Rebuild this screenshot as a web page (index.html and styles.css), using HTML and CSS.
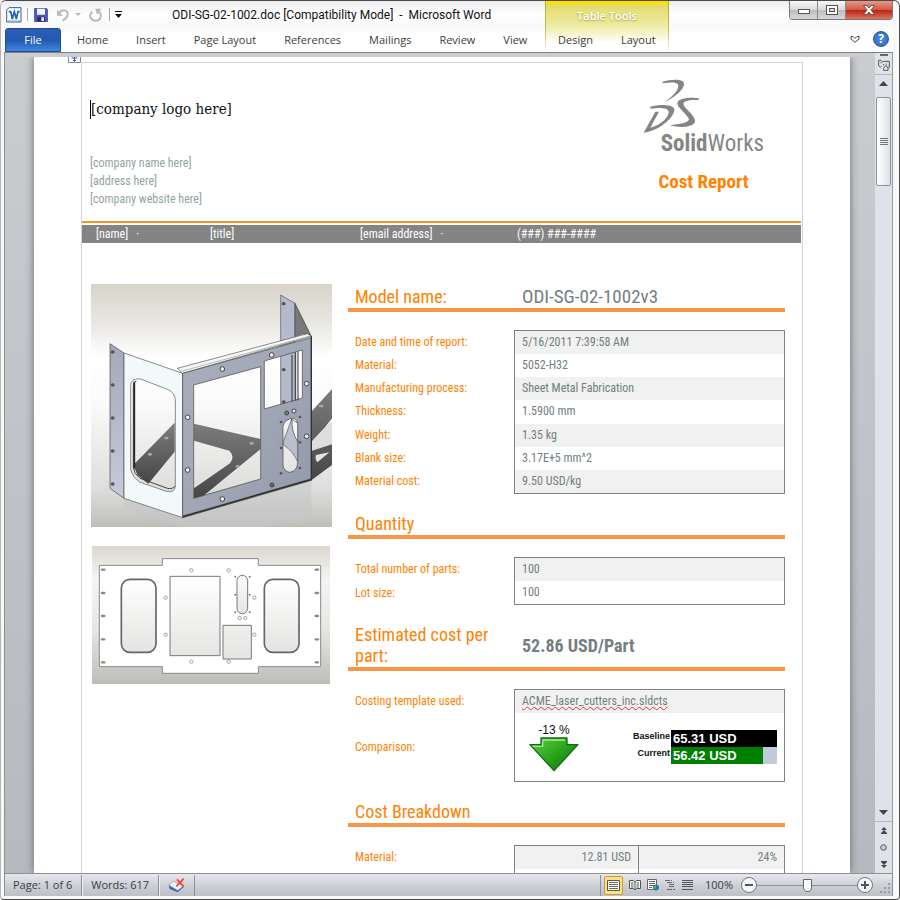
FILE: index.html
```html
<!DOCTYPE html>
<html lang="en">
<head>
<meta charset="utf-8">
<title>ODI-SG-02-1002.doc [Compatibility Mode] - Microsoft Word</title>
<link rel="stylesheet" href="styles.css">
</head>
<body>
<div class="window">
  <header class="head">
    <div class="head-main">
      <div class="titlebar">
        <svg class="word-icon" width="16" height="16" viewBox="0 0 48 48"><path d="M9 2h36v43H2V9z" fill="#fff" stroke="#2c5c96" stroke-width="3"/><path d="M8 14h6l5 22 6-22 6 22 5-22h5" fill="none" stroke="#1e62b8" stroke-width="5"/><path d="M6 40h36" stroke="#9cc4ea" stroke-width="3"/></svg>
        <span class="sep"></span>
        <button class="tool" aria-label="Save"><svg width="14" height="14" viewBox="0 0 42 42"><path d="M1 1h36l4 4v36H1z" fill="#5159b8" stroke="#373d94" stroke-width="2"/><path d="M9 2h24v18H9z" fill="#eef3fd"/><path d="M10 26h23v15H10z" fill="#272b6d"/><path d="M22 28h8v11h-8z" fill="#e5e9f8"/></svg></button>
        <button class="tool undo" aria-label="Undo"><svg width="14" height="14" viewBox="0 0 42 42"><path d="M8 17C17 2 36 5 35 19c0 9-7 14-15 19" fill="none" stroke="#b8b8b8" stroke-width="6"/><path d="M3 5v18h18z" fill="#b8b8b8"/></svg></button>
        <svg class="undo-caret" width="6" height="4" viewBox="0 0 6 4"><path d="M0 0h6L3 3z" fill="#bbb"/></svg>
        <button class="tool redo" aria-label="Redo"><svg width="13" height="14" viewBox="0 0 39 42"><path d="M10 11C-3 23 5 38 20 38c17 0 20-20 8-28" fill="none" stroke="#b8b8b8" stroke-width="6"/><path d="M19 2h18L24 20z" fill="#b8b8b8"/></svg></button>
        <span class="sep"></span>
        <button class="tool more" aria-label="Customize toolbar"><svg width="7" height="7" viewBox="0 0 7 7"><path d="M0 0h7v1H0zM0 3h7L3.500 7z" fill="#111"/></svg></button>
        <h1 class="caption">ODI-SG-02-1002.doc [Compatibility Mode] &nbsp;-&nbsp; Microsoft Word</h1>
      </div>
      <nav class="tabs">
        <button class="file">File</button><button>Home</button><button>Insert</button><button>Page Layout</button><button>References</button><button>Mailings</button><button>Review</button><button>View</button>
      </nav>
    </div>
    <div class="context">
      <div class="context-name">Table Tools</div>
      <nav class="tabs context-tabs"><button>Design</button><button>Layout</button></nav>
    </div>
    <div class="head-end">
      <div class="win-buttons">
        <button aria-label="Minimize"><svg width="14" height="14" viewBox="0 0 14 14"><rect x="1.500" y="6.500" width="11" height="4" fill="#fff" stroke="#555"/></svg></button>
        <button aria-label="Restore"><svg width="12" height="12" viewBox="0 0 12 12"><rect x=".5" y="1.500" width="11" height="9" fill="#fff" stroke="#555"/><rect x="3.500" y="4.500" width="5" height="3" fill="#ddd" stroke="#555"/></svg></button>
        <button class="close" aria-label="Close"><svg width="12" height="10" viewBox="0 0 12 10"><path d="M.5.500h3.500l2 2.500 2-2.500h3.500L8 5l3.500 4.500H8L6 7 4 9.500H.5L4 5z" fill="#fff" stroke="#5b3a3a" stroke-width=".8"/></svg></button>
      </div>
      <div class="help-row">
        <button class="tool" aria-label="Minimize the ribbon"><svg width="10" height="8" viewBox="0 0 10 8"><path d="M1 1.500h2l2 2 2-2h2V4L5 7.300 1 4z" fill="#fff" stroke="#444"/></svg></button>
        <button class="help" aria-label="Help">?</button>
      </div>
    </div>
  </header>

  <div class="work">
    <main class="page">
      <span class="move"><svg width="13" height="6" viewBox="0 0 13 6"><path d="M.5 0v5.500h12V0" fill="#fff" stroke="#888"/><path d="M6.500 0v4M3.500 1h6M5 3l1.500 1.500L8 3" stroke="#3a5fae" fill="none"/></svg></span>
      <div class="sheet">
        <section class="letterhead">
          <div class="company">
            <p class="logo-text"><span class="cursor"></span>[company logo here]</p>
            <p>[company name here]</p>
            <p>[address here]</p>
            <p>[company website here]</p>
          </div>
          <div class="brand">
            <svg width="121" height="76" viewBox="130 232 363 228" role="img" aria-label="SolidWorks">
              <g fill="#858585">
                <path d="M188 243C211 236 241 234 251 243C261 257 233 286 196 303C221 286 240 264 235 252C230 244 211 245 190 248Z"/>
                <path fill-rule="evenodd" d="M151 318C181 310 220 311 224 325C226 349 180 390 132 396L167 333L178 333L152 381C182 374 208 349 207 333C205 322 181 320 153 324Z"/>
                <path d="M297 293C276 289 235 291 233 307C231 320 264 342 268 356C266 367 239 371 210 373C232 381 277 383 286 364C290 346 253 323 251 310C252 299 275 297 297 299Z"/>
              </g>
              <text x="183" y="451" class="solid">Solid<tspan class="works">Works</tspan></text>
            </svg>
            <h2>Cost Report</h2>
          </div>
        </section>
        <div class="contact"><span>[name]<i>·</i></span><span>[title]</span><span>[email address]<i>·</i></span><span>(###) ###-####</span></div>

        <div class="report">
          <div class="pictures">
            <svg width="241" height="243" viewBox="33 27 723 729" role="img" aria-label="Sheet metal part">
              <defs>
                <linearGradient id="sky" x2="0" y2="1"><stop offset="0" stop-color="#d7d3c9"/><stop offset=".16" stop-color="#e9e7e2"/><stop offset=".3" stop-color="#fff"/><stop offset=".5" stop-color="#fafafa"/><stop offset=".84" stop-color="#dededc"/><stop offset="1" stop-color="#bebeb9"/></linearGradient>
                <linearGradient id="shade" x2="0" y2="1"><stop offset="0" stop-color="#7d7d7d"/><stop offset="1" stop-color="#454545"/></linearGradient>
                <linearGradient id="steel" x2="1" y2="1"><stop offset="0" stop-color="#a9aebd"/><stop offset=".5" stop-color="#a2a7b6"/><stop offset="1" stop-color="#9298aa"/></linearGradient>
                <linearGradient id="flange" x2="0" y2="1"><stop offset="0" stop-color="#a4a9ba"/><stop offset="1" stop-color="#c6cada"/></linearGradient>
              </defs>
              <path fill="url(#sky)" d="M33 27h723v729H33z"/>
              <path d="M132 670L308 728 694 616V735L540 756H300L132 700z" fill="#c5c7c9" opacity=".55"/>
              <path d="M694 410L756 342V430L736 455 756 452V570L694 616z" fill="url(#shade)"/>
              <path d="M694 500L736 455 756 440V508L694 528z" fill="#dededc"/>
              <path d="M708 540l40-8-36 30q-8-10-4-22z" fill="#e4e4e2"/>
              <path d="M160 570L284 443V530L205 626 172 600z" fill="url(#shade)"/>
              <path d="M342 446L542 492V522L366 666 342 670V640L450 565Q466 545 448 527L342 497z" fill="url(#shade)"/>
              <path d="M602 60L645 85V393L602 404z" fill="#b4bacb" stroke="#555" stroke-width="2"/>
              <path d="M645 85L694 184 668 176 645 184z" fill="#77787c" stroke="#444" stroke-width="2"/>
              <path d="M90 206L132 234V670L90 640z" fill="url(#flange)" stroke="#444" stroke-width="2"/>
              <path fill-rule="evenodd" d="M132 234L308 295V728L132 670zM166 313Q152 315 152 334V584Q156 605 178 621L262 650Q284 653 286 634V374Q285 354 265 344L182 312Q173 310 166 313z" fill="#f3f9fa" stroke="#555" stroke-width="2"/>
              <path d="M169 318Q160 320 160 335V578Q161 596 180 610L262 640Q277 644 285 633" fill="none" stroke="#444" stroke-width="3"/>
              <path d="M163 320v260" stroke="#222" stroke-width="5"/>
              <path d="M292 280L682 176 694 184 308 295z" fill="#f5f6f7" stroke="#555" stroke-width="2"/>
              <path d="M304 289L690 183" stroke="#999" stroke-width="2"/>
              <path fill-rule="evenodd" d="M308 295L694 188V616L308 728zM341 330V670L542 612V275zM553 258V402L667 369V225zM609 455V570Q611 590 630 592 653 588 653 560V445Q648 425 630 431 611 438 609 455z" fill="url(#steel)" stroke="#444" stroke-width="2"/>
              <path d="M636 240V380M647 232V377M654 230V376" stroke="#333" stroke-width="3"/>
              <path d="M610 500L635 432 653 500V560Q640 530 611 510z" fill="#babfd0" stroke="#555" stroke-width="2"/>
              <path d="M636 432Q634 470 653 500V445z" fill="#f4f6f8" stroke="#444" stroke-width="2"/>
              <path d="M308 725L694 613" stroke="#333" stroke-width="5"/>
              <path d="M694 184V616" stroke="#333" stroke-width="4"/>
              <g fill="#eee" stroke="#444" stroke-width="3"><circle cx="427" cy="282" r="7"/><circle cx="575" cy="240" r="7"/><circle cx="680" cy="326" r="7"/><circle cx="323" cy="427" r="7"/><circle cx="323" cy="585" r="7"/><circle cx="427" cy="672" r="7"/><circle cx="680" cy="484" r="7"/><circle cx="642" cy="408" r="6"/><circle cx="576" cy="630" r="6" fill="#666"/><circle cx="620" cy="414" r="6" fill="#777"/></g>
              <g fill="#555"><circle cx="603" cy="441" r="4"/><circle cx="660" cy="426" r="4"/><circle cx="603" cy="519" r="4"/><circle cx="660" cy="502" r="4"/><circle cx="603" cy="595" r="4"/><circle cx="660" cy="579" r="4"/><ellipse cx="98" cy="231" rx="6" ry="5"/><ellipse cx="98" cy="330" rx="6" ry="5"/><ellipse cx="98" cy="429" rx="6" ry="5"/><ellipse cx="98" cy="528" rx="6" ry="5"/><ellipse cx="98" cy="627" rx="6" ry="5"/><ellipse cx="611" cy="86" rx="6" ry="5"/><ellipse cx="611" cy="284" rx="6" ry="5"/><ellipse cx="611" cy="381" rx="6" ry="5"/></g>
              <g fill="#aaa"><ellipse cx="259" cy="489" rx="7" ry="4"/><ellipse cx="210" cy="538" rx="7" ry="4"/><ellipse cx="515" cy="505" rx="7" ry="4"/><ellipse cx="473" cy="574" rx="7" ry="4"/><ellipse cx="724" cy="393" rx="7" ry="4"/></g>
            </svg>
            <svg class="flat" width="238" height="138" viewBox="36 33 714 414" role="img" aria-label="Flat pattern">
              <defs>
                <linearGradient id="flatbg" x2="0" y2="1"><stop offset="0" stop-color="#dad7ce"/><stop offset=".25" stop-color="#f6f5f3"/><stop offset=".6" stop-color="#e6e6e3"/><stop offset="1" stop-color="#bdbdb8"/></linearGradient>
                <linearGradient id="hole" x2="0" y2="1"><stop offset="0" stop-color="#fff"/><stop offset="1" stop-color="#e4e4e2"/></linearGradient>
              </defs>
              <path fill="url(#flatbg)" d="M36 33h714v414H36z"/>
              <path d="M58 91H247V71H535V91H722V395H535V415H247V395H58z" fill="#fff" stroke="#8a8a8a" stroke-width="3"/>
              <g fill="url(#hole)" stroke="#666" stroke-width="5"><rect x="124" y="133" width="104" height="219" rx="26"/><rect x="553" y="133" width="104" height="219" rx="26"/></g>
              <g fill="url(#hole)" stroke="#777" stroke-width="3"><path d="M270 124h150v238H270zM429 271h85v101h-85z"/><rect x="471" y="121" width="32" height="115" rx="16"/></g>
              <g fill="#fff" stroke="#777" stroke-width="2"><circle cx="334" cy="106" r="5"/><circle cx="446" cy="106" r="5"/><circle cx="257" cy="188" r="5"/><circle cx="523" cy="188" r="5"/><circle cx="257" cy="299" r="5"/><circle cx="523" cy="299" r="5"/><circle cx="334" cy="380" r="5"/><circle cx="446" cy="380" r="5"/><circle cx="479" cy="249" r="5"/><circle cx="496" cy="249" r="5"/></g>
              <g fill="#777"><circle cx="466" cy="125" r="3"/><circle cx="509" cy="125" r="3"/><circle cx="466" cy="179" r="3"/><circle cx="509" cy="179" r="3"/><circle cx="466" cy="232" r="3"/><circle cx="509" cy="232" r="3"/></g>
              <path d="M66 104h7M66 174h7M66 243h7M66 313h7M66 382h7M707 104h7M707 174h7M707 243h7M707 313h7M707 382h7" stroke="#888" stroke-width="7" stroke-linecap="round"/>
            </svg>
          </div>

          <div class="facts">
            <h3><span>Model name:</span><span class="value">ODI-SG-02-1002v3</span></h3>
            <table class="general">
              <tr><th scope="row">Date and time of report:</th><td>5/16/2011 7:39:58 AM</td></tr>
              <tr><th scope="row">Material:</th><td>5052-H32</td></tr>
              <tr><th scope="row">Manufacturing process:</th><td>Sheet Metal Fabrication</td></tr>
              <tr><th scope="row">Thickness:</th><td>1.5900 mm</td></tr>
              <tr><th scope="row">Weight:</th><td>1.35 kg</td></tr>
              <tr><th scope="row">Blank size:</th><td>3.17E+5 mm^2</td></tr>
              <tr><th scope="row">Material cost:</th><td>9.50 USD/kg</td></tr>
            </table>
            <h3><span>Quantity</span></h3>
            <table>
              <tr><th scope="row">Total number of parts:</th><td>100</td></tr>
              <tr><th scope="row">Lot size:</th><td>100</td></tr>
            </table>
            <h3><span>Estimated cost per part:</span><strong class="value">52.86 USD/Part</strong></h3>
            <table>
              <tr><th scope="row">Costing template used:</th><td><span class="misspelt">ACME_laser_cutters_inc.sldcts</span></td></tr>
              <tr><th scope="row">Comparison:</th><td>
                <div class="compare">
                  <div class="change">-13 %
                    <svg width="50" height="35" viewBox="0 0 150 105"><defs><linearGradient id="green" x2="1" y2="1"><stop offset="0" stop-color="#5fd045"/><stop offset=".5" stop-color="#2ba51c"/><stop offset="1" stop-color="#08720a"/></linearGradient></defs><path d="M36 3h78v20h33L75 101 3 23h33z" fill="url(#green)" stroke="#126b12" stroke-width="4" stroke-linejoin="round"/><path d="M41 9h67M11 28h30V11" stroke="#a6eb91" stroke-width="4" fill="none"/></svg>
                  </div>
                  <div class="bars">
                    <span>Baseline</span><b class="bar baseline">65.31 USD</b>
                    <span>Current</span><b class="bar current">56.42 USD</b>
                  </div>
                </div>
              </td></tr>
            </table>
            <h3><span>Cost Breakdown</span></h3>
            <table class="breakdown">
              <tr><th scope="row">Material:</th><td>12.81 USD</td><td>24%</td></tr>
              <tr><th></th><td></td><td></td></tr>
            </table>
          </div>
        </div>
      </div>
    </main>
    <aside class="scrollbar">
      <span class="split"></span>
      <button class="ruler" aria-label="View ruler"><svg width="12" height="12" viewBox="0 0 36 36"><path d="M2 4h7l5 5 6-2h14v18h-3M2 4v16l5 5 4-3" fill="none" stroke="#555" stroke-width="3"/><path d="M9 10v3M17 15v4M25 14v3" stroke="#555" stroke-width="3"/><path d="M24 19l6 8v7H17v-7z" fill="#eceef2" stroke="#555" stroke-width="3"/></svg></button>
      <button class="arrow" aria-label="Scroll up"><svg width="9" height="5" viewBox="0 0 9 5"><path d="M0 5h9L4.500 0z" fill="#444"/></svg></button>
      <div class="track"><div class="thumb"><i></i><i></i><i></i><i></i></div></div>
      <button class="arrow" aria-label="Scroll down"><svg width="9" height="5" viewBox="0 0 9 5"><path d="M0 0h9L4.500 5z" fill="#444"/></svg></button>
      <div class="browse">
        <button aria-label="Previous page"><svg width="6" height="7" viewBox="0 0 6 7"><path d="M0 3h6L3 0zM0 6h6L3 3zM0 6h6v1H0z" fill="#444"/></svg></button>
        <button aria-label="Select browse object"><svg width="7" height="7" viewBox="0 0 7 7"><circle cx="3.500" cy="3.500" r="2.800" fill="#ccd" stroke="#555"/></svg></button>
        <button aria-label="Next page"><svg width="6" height="7" viewBox="0 0 6 7"><path d="M0 1h6L3 4zM0 4h6L3 7zM0 0h6v1H0z" fill="#444"/></svg></button>
      </div>
    </aside>
  </div>

  <footer class="status">
    <button class="cell">Page: 1 of 6</button>
    <button class="cell">Words: 617</button>
    <button class="cell" aria-label="Proofing errors"><svg width="17" height="15" viewBox="0 0 51 45"><path d="M2 23L18 12 48 26 29 43 6 34z" fill="#3c65bb"/><path d="M2 21L17 10 46 24 29 37z" fill="#f0f5fc" stroke="#8a9cc0" stroke-width="2"/><path d="M27 4L47 26M47 2L25 25" stroke="#f04a2c" stroke-width="5"/></svg></button>
    <div class="views">
      <button class="on" aria-label="Print layout"><svg width="13" height="13" viewBox="0 0 13 13"><path d="M.5 1.500h12v10H.5z" fill="#fff" stroke="#555"/><path d="M2 3.500h9M2 5.500h9M2 7.500h9M2 9.500h9" stroke="#666"/></svg></button>
      <button aria-label="Full screen reading"><svg width="12" height="12" viewBox="0 0 12 12"><path d="M.5 1.500h4L6 3l1.500-1.500h4v8H7.500L6 11 4.500 9.500h-4zM6 3v8M2 4h2.500M2 6h2.500M2 8h2.500M7.500 4H10M7.500 6H10M7.500 8H10" fill="#fafafa" stroke="#555"/></svg></button>
      <button aria-label="Web layout"><svg width="12" height="12" viewBox="0 0 12 12"><path d="M.5.500h9v10h-9zM2 2.500h6M2 4.500h6M2 6.500h5M2 8.500h3" fill="#fff" stroke="#666"/><circle cx="9" cy="8.500" r="3" fill="#257ba8"/><path d="M7 7l2 0 0 2-1 1z" fill="#60b868"/></svg></button>
      <button aria-label="Outline"><svg width="11" height="10" viewBox="0 0 11 10"><path d="M0 .5h7M2 2.500h7M4 4.500h6M4 6.500h6M2 9.500h8" stroke="#666" stroke-dasharray="5 1"/></svg></button>
      <button aria-label="Draft"><svg width="11" height="10" viewBox="0 0 11 10"><path d="M0 .5h11M0 2.500h11M0 4.500h11M0 6.500h11M0 9.500h11" stroke="#555"/></svg></button>
    </div>
    <label class="percent" for="zoom">100%</label>
    <button class="round" aria-label="Zoom out"><svg width="8" height="8" viewBox="0 0 8 8"><path d="M0 3h8v2H0z" fill="#555"/></svg></button>
    <input id="zoom" class="zoom" type="range" min="0" max="100" value="50">
    <button class="round" aria-label="Zoom in"><svg width="8" height="8" viewBox="0 0 8 8"><path d="M0 3h8v2H0zM3 0h2v8H3z" fill="#555"/></svg></button>
    <svg class="grip" width="11" height="11" viewBox="0 0 11 11"><path d="M8 0h2v2H8zM4 4h2v2H4zM8 4h2v2H8zM0 8h2v2H0zM4 8h2v2H4zM8 8h2v2H8z" fill="#999ca2"/></svg>
  </footer>
</div>
</body>
</html>
```
FILE: styles.css
```css
* { box-sizing: border-box; }
body { margin: 0; background: #fff; color: #3c3c3c; font: 11px/16px "Open Sans", "Noto Sans", sans-serif; }
button { margin: 0; padding: 0; border: 0; background: none; color: inherit; font: inherit; display: flex; align-items: center; justify-content: center; }
h1, h2, h3, p { margin: 0; font-weight: normal; }
svg { display: block; flex: none; }

.window { height: 100vh; display: flex; flex-direction: column; overflow: hidden; border: 1px solid #4a4a4a; border-left-color: #b5b5b5; border-right: 1px solid #555; border-radius: 6px 6px 4px 4px; padding: 0 6px 3px 3px; background: #f8f8f8; }

.head { flex: none; display: flex; height: 52px; background: linear-gradient(#ececee, #fff 14px, #f8f8f9 24px, #fff 34px); border-bottom: 1px solid #7e8187; }
.head-main { width: 541px; flex: none; }
.titlebar { height: 27px; display: flex; align-items: center; padding: 0 0 0 2px; }
.sep { width: 1px; height: 13px; background: #aaa; margin: 0 6px 0 5px; }
.tool { flex: none; }
.undo { margin-left: 8px; }
.undo-caret { margin-left: 5px; }
.redo { margin-left: 8px; margin-right: 2px; }
.more { margin-left: -1px; }
.caption { margin-left: 50px; font: 12px/16px Roboto, "Open Sans", sans-serif; color: #111; white-space: nowrap; }
.tabs { display: flex; height: 24px; }
.tabs button { padding: 0 14px; white-space: nowrap; }
.tabs .file { width: 56px; margin: 0 2px 0 1px; padding: 0; background: linear-gradient(#2b5fb4, #2259b0 50%, #3f86dd); border: 1px solid #1d4b94; border-radius: 3px 3px 0 0; color: #fff; }
.context { width: 124px; flex: none; border-left: 1px solid; border-right: 1px solid; border-image: linear-gradient(#b4ac20, #c6c15a 60%, #fff) 1; background: linear-gradient(#ffe100, #ffe100 3px, #e1dc6c 4px, #eeeaa0 24px, #fff 42px); }
.context-name { height: 27px; line-height: 29px; text-align: center; font-weight: 600; color: #fff; text-shadow: 0 1px 2px #a29c40; }
.context-tabs { margin-left: -2px; }
.head-end { flex: 1; display: flex; flex-direction: column; align-items: flex-end; }
.win-buttons { display: flex; height: 19px; border: 1px solid #77797d; border-top: 0; border-radius: 0 0 4px 4px; overflow: hidden; }
.win-buttons button { width: 28px; background: linear-gradient(#f7f7f7, #d9d9db 50%, #bcbdc0 52%, #d8d8da); border-right: 1px solid #888; }
.win-buttons .close { width: 46px; border: 0; background: linear-gradient(#e79a88, #d15a46 48%, #b52816 52%, #e07258); }
.help-row { display: flex; align-items: center; gap: 13px; padding: 11px 4px 0 0; }
.help { width: 16px; height: 16px; border-radius: 50%; background: radial-gradient(#4d8fe0, #2b63bd); border: 1px solid #2a559d; color: #fff; font-weight: bold; font-size: 12px; }

.work { flex: 1; min-height: 0; display: flex; background: linear-gradient(#caccd0, #b6b9be); border-left: 1px solid #8d9096; border-right: 1px solid #9a9ca1; overflow: hidden; }
.page { flex: 1; min-width: 0; position: relative; margin: 4px 25px 0 29px; background: #fff; box-shadow: 0 0 8px #666a70; padding: 5px 47px 0; clip-path: inset(0 -10px 0 -10px); }
.move { position: absolute; left: 34px; top: 0; }
.sheet { height: 100%; overflow: hidden; border: 1px solid #d4d4d4; border-bottom: 0; font-family: "Roboto Condensed", "Liberation Sans Narrow", "Arial Narrow", sans-serif; color: #728080; }
.letterhead { display: flex; justify-content: space-between; height: 160px; border-bottom: 2px solid #f7941d; margin-right: 1px; }
.company { padding: 36px 0 0 8px; font-size: 12px; line-height: 18px; color: #95a3a0; }
.company .logo-text { display: flex; align-items: center; margin-bottom: 35px; font: 15px/20px "DejaVu Serif Condensed", "DejaVu Serif", serif; color: #111; }
.cursor { width: 1px; height: 19px; background: #000; }
.brand { width: 121px; margin: 15px 37px 0 0; }
.solid { font-family: "Roboto Condensed", "Arial Narrow", sans-serif; font-weight: bold; font-size: 69px; fill: #858585; }
.works { font-weight: normal; }
.brand h2 { margin-top: 17px; font-size: 19px; line-height: 22px; font-weight: bold; text-align: center; color: #ff8200; }
.contact { display: grid; grid-template-columns: 114px 150px 157px 1fr; margin: 2px 1px 0 0; padding-left: 14px; background: #838483; color: #fff; font-size: 12px; line-height: 18px; }
.contact i { margin-left: 8px; font-style: normal; }

.report { display: flex; gap: 16px; padding: 41px 17px 0 9px; }
.pictures { width: 241px; flex: none; }
.flat { margin: 19px 0 0 1px; }
.facts { flex: 1; min-width: 0; }
h3 { display: grid; grid-template-columns: 167px 1fr; align-items: center; margin: 19px 0 18px; border-bottom: 4px solid #f79646; padding-bottom: 1px; font-size: 18px; line-height: 21px; color: #ff8200; }
h3:first-child { margin-top: 2px; }
h3 span:first-child { padding-left: 7px; }
.value { padding-left: 7px; color: #728080; }
span.value { font-size: 19px; }
table { width: 100%; border-spacing: 0; table-layout: fixed; font-size: 12px; line-height: 23px; }
.general { height: 164px; }
th { width: 166px; padding: 0 0 0 7px; text-align: left; font-weight: normal; color: #ff8200; }
td { padding: 0 7px; border: solid #7f8183; border-width: 0 1px; }
tr:first-child td { border-top-width: 1px; }
tr:last-child td { border-bottom-width: 1px; }
tr:nth-child(odd) td { background: #f1f1f1; }
.breakdown td { text-align: right; }
.breakdown td:nth-child(2) { width: 124px; border-right: 0; }
.breakdown tr:last-child { height: 24px; }
.misspelt { text-decoration: underline wavy #e33 1px; text-underline-offset: 1px; }
.compare { display: flex; justify-content: space-between; height: 68px; padding-top: 10px; font-family: "Liberation Sans", sans-serif; color: #111; }
.change { width: 50px; margin-left: 7px; text-align: center; font-size: 12px; line-height: 14px; }
.bars { display: grid; grid-template-columns: auto 106px; grid-auto-rows: 17px; column-gap: 1px; align-content: start; margin-top: 7px; text-align: right; font-size: 9px; font-weight: bold; line-height: 12px; }
.bar { padding-left: 2px; text-align: left; color: #fff; font-size: 13px; line-height: 17px; background: #000; }
.current { background: linear-gradient(90deg, #008000 87%, #c0cad8 87%); }

.scrollbar { width: 17px; flex: none; display: flex; flex-direction: column; background: #dfe2e8; }
.split { height: 2px; width: 8px; background: #666; margin: 1px auto 0; }
.ruler { height: 19px; border-bottom: 1px solid #b5b9c1; }
.arrow { height: 17px; }
.track { flex: 1; padding-top: 5px; }
.thumb { height: 89px; width: 15px; margin: 0 auto; border: 1px solid #8d919a; border-radius: 2px; background: linear-gradient(90deg, #fff, #dde0e7); display: flex; flex-direction: column; align-items: center; justify-content: center; gap: 1px; }
.thumb i { width: 8px; height: 1px; background: #777; }
.browse { border-top: 1px solid #b5b9c1; height: 52px; display: flex; flex-direction: column; justify-content: space-around; align-items: center; }

.status { flex: none; display: flex; align-items: center; height: 23px; background: linear-gradient(#e6e8eb, #cdd0d5 50%, #bcc0c6); border: 1px solid #8c8f95; border-bottom: 0; }
.cell { height: 21px; padding: 0 9px 0 8px; border-right: 1px solid #8e9197; border-left: 1px solid #eceef0; }
.cell:first-child { border-left: 0; }
.views { margin-left: auto; display: flex; align-items: center; gap: 6px; height: 21px; padding-left: 3px; border-left: 1px solid #8e9197; }
.views .on { width: 19px; height: 19px; background: #ffe083; border: 1px solid #c69c3e; border-radius: 2px; }
.percent { margin: 0 8px 0 12px; }
.round { width: 16px; height: 16px; border: 1px solid #777; border-radius: 50%; background: #f6f7f8; }
.zoom { appearance: none; width: 100px; height: 16px; margin: 0; background: linear-gradient(#8e9299, #8e9299) center / 100% 1px no-repeat; }
.zoom::-webkit-slider-thumb { appearance: none; width: 9px; height: 13px; border: 1px solid #666; border-radius: 1px 1px 5px 5px; background: #f8f8f9; }
.grip { margin: 7px 1px 0 7px; }
```
